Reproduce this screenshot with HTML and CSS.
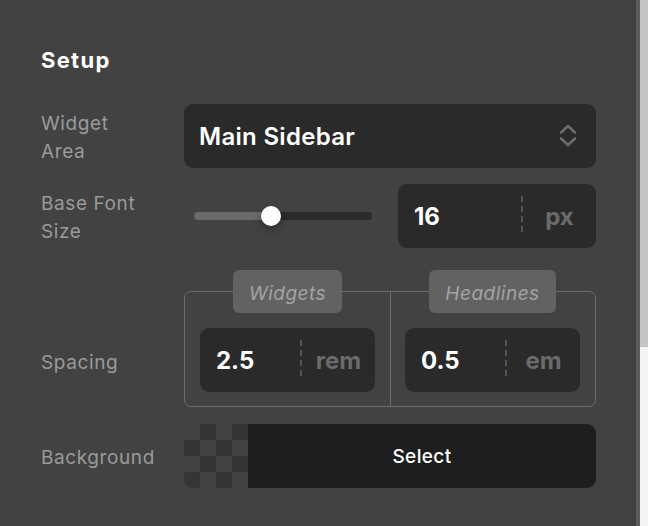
FILE: index.html
```html
<!DOCTYPE html>
<html lang="en">
<head>
<meta charset="utf-8">
<title>Setup</title>
<link rel="stylesheet" href="styles.css">
</head>
<body>
<div class="window">
  <section class="panel">
    <h2 class="title">Setup</h2>

    <div class="row row-first">
      <div class="label">Widget Area</div>
      <button class="select" type="button">
        <span class="select-text">Main Sidebar</span>
        <svg class="chevrons" width="18" height="24" viewBox="0 0 18 24" aria-hidden="true">
          <polyline points="2,8.5 9,2 16,8.5" fill="none" stroke="#6b6b6b" stroke-width="2.6" stroke-linecap="round" stroke-linejoin="round"/>
          <polyline points="2,14.5 9,21 16,14.5" fill="none" stroke="#6b6b6b" stroke-width="2.6" stroke-linecap="round" stroke-linejoin="round"/>
        </svg>
      </button>
    </div>

    <div class="row row-font">
      <div class="label">Base Font Size</div>
      <div class="font-control">
        <div class="slider">
          <div class="track">
            <div class="fill" style="width: 43%"></div>
            <div class="knob" style="left: 43%"></div>
          </div>
        </div>
        <div class="num num-wide">
          <span class="num-value">16</span>
          <span class="num-sep"></span>
          <span class="num-unit">px</span>
        </div>
      </div>
    </div>

    <div class="row row-spacing">
      <div class="label label-low">Spacing</div>
      <div class="group">
        <div class="group-col">
          <span class="pill">Widgets</span>
          <div class="num">
            <span class="num-value">2.5</span>
            <span class="num-sep"></span>
            <span class="num-unit">rem</span>
          </div>
        </div>
        <div class="group-col group-col-right">
          <span class="pill">Headlines</span>
          <div class="num">
            <span class="num-value">0.5</span>
            <span class="num-sep"></span>
            <span class="num-unit">em</span>
          </div>
        </div>
      </div>
    </div>

    <div class="row row-bg">
      <div class="label">Background</div>
      <div class="bg-picker">
        <span class="checker"></span>
        <button class="bg-select" type="button">Select</button>
      </div>
    </div>
  </section>
  <div class="edge"></div>
  <div class="scrollbar"><div class="scroll-thumb"></div></div>
</div>
</body>
</html>
```

FILE: styles.css
```css
* { box-sizing: border-box; }

html, body {
  margin: 0;
  padding: 0;
}

body {
  background: #f4f4f4;
  font-family: Inter, "Noto Sans", "Liberation Sans", sans-serif;
  -webkit-font-smoothing: antialiased;
}

.window {
  display: flex;
  height: 526px;
  width: 648px;
  overflow: hidden;
}

.panel {
  width: 636px;
  flex: none;
  background: #424242;
  padding: 48px 0 0 41px;
}

.edge {
  width: 4px;
  flex: none;
  background: #5c5c5c;
}

.scrollbar {
  width: 8px;
  flex: none;
  background: #f4f4f4;
}

.scroll-thumb {
  height: 347px;
  background: #c4c4c4;
}

.title {
  margin: 0;
  font-size: 22px;
  line-height: 24px;
  font-weight: 700;
  letter-spacing: 1.3px;
  color: #ffffff;
}

.row {
  display: grid;
  grid-template-columns: 100px 412px;
  column-gap: 43px;
  align-items: center;
}

.row-first { margin-top: 32px; }
.row-font { margin-top: 16px; }
.row-spacing { margin-top: 22px; align-items: end; }
.row-bg { margin-top: 17px; }

.label {
  margin-top: 4px;
  font-size: 19px;
  line-height: 28px;
  letter-spacing: 0.6px;
  color: #9a9a9a;
  white-space: normal;
}

.label-low {
  margin-bottom: 30px;
  white-space: nowrap;
}

.row-bg .label { white-space: nowrap; }

/* select */
.select {
  display: flex;
  align-items: center;
  justify-content: space-between;
  height: 64px;
  width: 412px;
  padding: 0 19px 0 15px;
  border: none;
  border-radius: 9px;
  background: #2a2a2a;
  color: #ffffff;
  font-family: inherit;
  font-size: 24px;
  font-weight: 600;
  letter-spacing: 0.3px;
  cursor: pointer;
}

.chevrons { display: block; }

/* slider + number */
.font-control {
  display: flex;
  align-items: center;
  height: 64px;
}

.slider {
  flex: 1;
  padding: 0 26px 0 10px;
}

.track {
  position: relative;
  height: 8px;
  border-radius: 4px;
  background: #2a2a2a;
}

.fill {
  height: 8px;
  border-radius: 4px 0 0 4px;
  background: #6b6b6b;
}

.knob {
  position: absolute;
  top: -6px;
  width: 20px;
  height: 20px;
  margin-left: -10px;
  border-radius: 50%;
  background: #ffffff;
  box-shadow: 0 3px 8px rgba(0, 0, 0, 0.35);
}

.num {
  display: flex;
  align-items: center;
  height: 64px;
  border-radius: 9px;
  background: #2a2a2a;
}

.num-wide {
  width: 198px;
  flex: none;
}

.num-value {
  flex: 1;
  padding-left: 16px;
  font-size: 24px;
  font-weight: 700;
  color: #ffffff;
}

.num-sep {
  width: 2px;
  height: 40px;
  flex: none;
  background: repeating-linear-gradient(to bottom, #555555 0 6px, transparent 6px 10px);
}

.num-unit {
  width: 73px;
  flex: none;
  text-align: center;
  font-size: 24px;
  font-weight: 700;
  color: #6b6b6b;
}

/* spacing group */
.group {
  display: grid;
  grid-template-columns: 1fr 1fr;
  margin-top: 21px;
  border: 1px solid #6c6c6c;
  border-radius: 7px;
}

.group-col {
  display: flex;
  flex-direction: column;
  align-items: center;
  padding: 0 15px 14px;
}

.group-col-right {
  border-left: 1px solid #6c6c6c;
  padding-left: 14px;
}

.pill {
  margin-top: -22px;
  height: 43px;
  padding: 3px 16px 0;
  display: flex;
  align-items: center;
  border-radius: 6px;
  background: #626262;
  color: #a3a3a3;
  font-size: 19px;
  font-style: italic;
  letter-spacing: 0.5px;
}

.group .num {
  align-self: stretch;
  margin-top: 15px;
}

.group .num-value { padding-left: 16px; }

/* background */
.bg-picker {
  display: flex;
  height: 64px;
  border-radius: 9px;
  overflow: hidden;
}

.checker {
  width: 64px;
  flex: none;
  background: repeating-conic-gradient(#353535 0 25%, #434343 0 50%) 0 0 / 32px 32px;
}

.bg-select {
  flex: 1;
  border: none;
  background: #1e1e1e;
  color: #ffffff;
  font-family: inherit;
  font-size: 19px;
  font-weight: 500;
  letter-spacing: 0.4px;
  cursor: pointer;
}
```
